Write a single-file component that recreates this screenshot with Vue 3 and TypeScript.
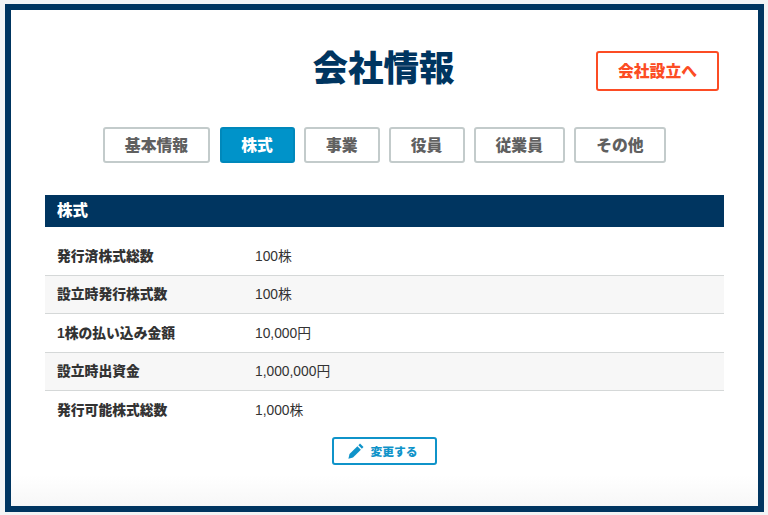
<script setup lang="ts">
const tabs = ['基本情報', '株式', '事業', '役員', '従業員', 'その他']
const activeTab = '株式'
const rows = [
  { label: '発行済株式総数', value: '100株' },
  { label: '設立時発行株式数', value: '100株' },
  { label: '1株の払い込み金額', value: '10,000円' },
  { label: '設立時出資金', value: '1,000,000円' },
  { label: '発行可能株式総数', value: '1,000株' },
]
</script>

<template>
  <div class="page">
    <div class="frame">
      <header class="head">
        <h1 class="title">会社情報</h1>
        <a class="cta">会社設立へ</a>
      </header>
      <nav class="tabs">
        <a v-for="t in tabs" :key="t" class="tab" :class="{ active: t === activeTab }">{{ t }}</a>
      </nav>
      <section class="section">
        <h2 class="bar">株式</h2>
        <div class="list">
          <div v-for="r in rows" :key="r.label" class="row">
            <div class="label">{{ r.label }}</div>
            <div class="value">{{ r.value }}</div>
          </div>
        </div>
        <div class="actions">
          <a class="edit">
            <svg class="pen" viewBox="0 0 16 16" width="16" height="16">
              <path d="M12 0.6 L15.5 4.1 L13.9 5.7 L10.4 2.2 Z" fill="#0f93c9" />
              <path d="M9.4 3.2 L12.9 6.7 L5 14.6 L0.4 15.7 L1.5 11.1 Z" fill="#0f93c9" />
            </svg>
            <span>変更する</span>
          </a>
        </div>
      </section>
    </div>
  </div>
</template>

<style>
html, body { margin: 0; background: #f3f4f5; }
</style>

<style scoped>
.page {
  box-sizing: border-box;
  width: 768px;
  height: 515px;
  padding: 4px 4px 3px 5px;
  background: #f3f4f5;
  font-family: "Liberation Sans", "Noto Sans CJK JP", sans-serif;
}
.frame {
  box-sizing: border-box;
  height: 508px;
  border: 6px solid #003560;
  background: linear-gradient(#fff 0, #fff 465px, #f7f7f7 496px);
  padding: 41px 34px 0;
}
.head {
  position: relative;
  display: flex;
  justify-content: center;
  height: 40px;
}
.title {
  margin: -2px 2px 0 0;
  font-size: 35.5px;
  line-height: 40px;
  font-weight: 900;
  color: #003560;
}
.cta {
  position: absolute;
  top: 0;
  right: 5px;
  box-sizing: border-box;
  width: 123px;
  height: 40px;
  padding-bottom: 2px;
  border: 2px solid #fc4c24;
  border-radius: 3px;
  display: flex;
  align-items: center;
  justify-content: center;
  color: #fc4c24;
  font-size: 15.8px;
  font-weight: 900;
}
.tabs {
  display: flex;
  justify-content: center;
  gap: 9.2px;
  margin-top: 36px;
}
.tab {
  box-sizing: border-box;
  height: 36px;
  padding: 0 20.3px 2px 19.7px;
  border: 2px solid #c3cbcb;
  border-radius: 3px;
  background: #fff;
  color: #606060;
  font-size: 15.8px;
  font-weight: 900;
  display: flex;
  align-items: center;
}
.tab.active {
  background: #0093c9;
  border-color: #0088bb;
  color: #fff;
}
.section { margin-top: 32px; }
.bar {
  margin: 0;
  height: 32px;
  padding-left: 12px;
  background: #003560;
  color: #fff;
  font-size: 15.5px;
  line-height: 32px;
  font-weight: 900;
}
.list { margin-top: 10px; }
.row {
  box-sizing: border-box;
  height: 38.5px;
  display: flex;
  align-items: center;
  padding: 0 0 2px 12px;
  border-bottom: 1px solid #d5d8d8;
  font-size: 13.8px;
  color: #333;
}
.row:nth-child(even) { background: #f7f7f7; }
.row:last-child { border-bottom: 0; }
.label { width: 198px; font-weight: 900; }
.actions {
  display: flex;
  justify-content: center;
  margin-top: 7px;
}
.edit {
  box-sizing: border-box;
  width: 105px;
  height: 28px;
  border: 2px solid #0f93c9;
  border-radius: 3px;
  display: flex;
  align-items: center;
  justify-content: center;
  gap: 6px;
  padding-right: 3px;
  color: #0f93c9;
  font-size: 11.8px;
  font-weight: 900;
}
</style>
